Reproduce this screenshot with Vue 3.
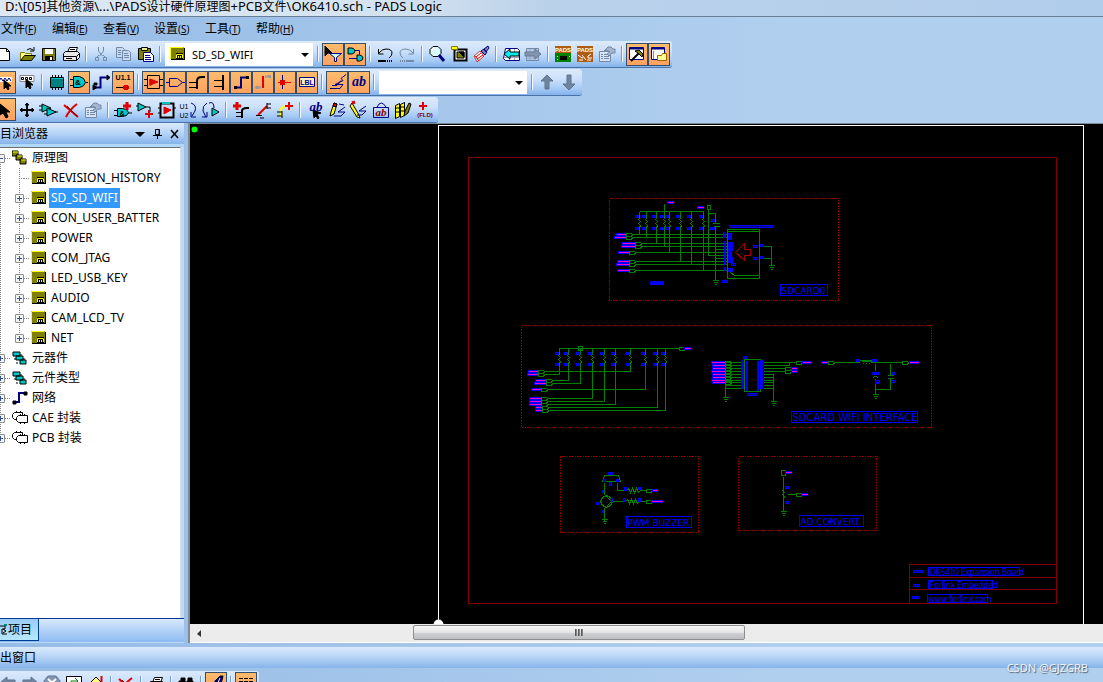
<script setup>
import { ref, h } from 'vue'

const K = '#000'
const N = '#000080'
const T = '#008080'
const C = '#00c8c8'
const R = '#e00000'
const Y = '#ffff00'
const O = '#808000'
const W = '#fff'
const G = '#7288a4'
const X = 'none'

/* Each icon is a list of [path, fill, stroke, stroke width] on a 22 x 22 cell. */
const gate = (x, y) => [`M${x} ${y}h5q5 0 6 4q-1 4-6 4h-5z`, C, K]
const icons = {
  new: [['M2.5 5.5h10l3 3v9h-13z', W, K], ['M12.5 5.5v3h3', X, K]],
  open: [['M4.5 17.5v-8h4l1 1h6v3', '#ffff90', O], ['M4.5 17.5l4-5h11l-4 5z', O, K], ['M11 7q3-3 6 0M18 4v4h-4', X, K]],
  save: [['M4.5 5.5h13v12h-13z', O, K], ['M7 6h8v5h-8z', W, X], ['M7 13h8v4h-8z', K, X], ['M12 14h2v3h-2z', W, X]],
  print: [['M7.5 9.5l2-5h8l-2 5z', W, K], ['M10 6.5h5M9 8.5h5', X, K], ['M3.5 10.5l2-2h12l2 2v4l-3 3h-13z', '#e6e6e6', K], ['M3.5 13.5h13v4M16.5 13.5l3-3M6 15.5h6', X, K]],
  cut: [['M8.5 4v4l4 5M13.5 4v4l-4 5', X, G], ['M5.5 14.5h3v3h-3zM13.5 14.5h3v3h-3zM9 12l-2 2M13 12l2 2', X, G]],
  copy: [['M4.5 4.5h6l2 2v8h-8z', '#c5daf5', G], ['M10.5 7.5h6l2 2v8h-8z', '#c5daf5', G], ['M6 7.5h3M6 9.5h3M6 11.5h3M12 10.5h4M12 12.5h5M12 14.5h5', X, G]],
  paste: [['M4.5 5.5h12v11h-12z', O, K], ['M7.5 4.5h6v3h-6z', '#eeee80', K], ['M9.5 9.5h7l3 3v6h-10z', W, N], ['M11 12.5h5M11 14.5h6M11 16.5h6', X, N]],
  filter: [['M3 3v10l3-3 4 0z', K, K], ['M7.5 10.5h12l-5 4v4h-2v-4z', '#c8ffff', N]],
  netfilter: [['M4 5h4q3 1 3 3t-3 3h-4z', C, K], ['M13 12h3q3 1 3 3t-3 3h-3z', C, K], ['M11 7.5h4.5v4M5 15.5h8', X, N]],
  undo: [['M5 10q3-4 7-4 6 0 6 4 0 3-3 5M4.5 6v5h5', X, K], ['M4 18h8M13 18h1M15 18h1M17 18h1', X, K, 2]],
  redo: [['M17 10q-3-4-7-4-6 0-6 4 0 3 3 5M17.500 6v5h-5', X, G], ['M10 18h8M4 18h1M6 18h1M8 18h1', X, G, 2]],
  zoom: [['M7 3.500h5l3 3v4l-3 3h-5l-3-3v-4z', '#d8ffff', K], ['M6 9q0-3 3-3', X, W, 2], ['M13 12l5 6', X, N, 3]],
  board: [['M6.5 6.5h12v11h-12z', W, K, 2], ['M9 9h7v6h-7z', O, K], ['M11 9l5 5v-5z', K, K], ['M3.500 3.500h6v3h-6z', Y, O]],
  redraw: [['M4 13l6-5 4 5-7 6z', W, '#c04040'], ['M6 14l5-4M7 16l6-4M5 13l4 5', X, R], ['M11 8l3-2 3 3-2 3zM14 6l4-3 1 2-3 4z', '#8080b8', N]],
  prev: [['M5.5 5.5h12l2 2v10h-14l-2-2z', W, N], ['M9.500 6v11M14.500 6v11M4 14.500h15', X, '#a0a0c8'], ['M4 11l6-5v3h9v4h-9v3z', '#00f0f0', K]],
  next: [['M4.5 5.5h12v12h-12z', '#b5cbe8', G], ['M8 6v11M12 6v11M4 15h13', X, '#90a8c8'], ['M19 11l-6-5v3h-10v4h10v3z', '#8295b0', '#66798f']],
  pads: [['M3 3h16v16h-16z', '#b05c10', X], ['M3 10h16v9h-16z', '#008000', X], ['M8 13h7v4h-7z', K, X], ['M5 13h1v1h-1zM17 13h1v1h-1zM5 16h1v1h-1z', Y, X]],
  padsr: [['M3 3h16v16h-16z', '#b05c10', X], ['M4 12l4 3h1M8 12l4 5M5 17h4M17 11l-3 2v2h4M13 17h4', X, W]],
  props: [['M3.5 8.5h11v10h-11z', '#d5e4f7', G], ['M5 11.5h2M8 11.5h5M5 13.5h2M8 13.5h5M5 15.5h2M8 15.5h5', X, G], ['M8 8l4-4h3l2 2h2v4h-3l-3 3-2-2 3-2-3-2z', '#a4b5ce', G]],
  hammerw: [['M3.5 4.5h14v12h-14z', W, N], ['M4 5.5h13', X, N, 2], ['M5 18l8-8', X, K, 2], ['M9 8l4-1 4 4-1 3-4-4z', O, K]],
  windows: [['M3.5 4.5h13v12h-13z', W, N], ['M4 5.5h12', X, N, 2], ['M5.5 8v8', X, '#8080c0'], ['M9.5 12.5h4l1-2h4v7h-9z', '#ffff90', '#a06000']],
  netsel: [['M2 6h16v5h-16z', W, X], ['M3 7l2 3 2-3 2 3 2-3 2 3 2-3 2 3', X, N], ['M10 9v9l2-2 2 3 1-1-1-3h3z', K, K]],
  pinsel: [['M4 4.5h14v6h-14z', W, '#888'], ['M5.5 6.5h2v2h-2zM9.5 6.5h2v2h-2zM13.5 6.5h2v2h-2z', X, K], ['M10 8v9l2-2 2 3 1-1-1-3h3z', K, K]],
  chip: [['M4.5 6.5h13v10h-13z', T, K], ['M6.5 4v3M9.5 4v3M12.5 4v3M15.5 4v3M6.5 16v3M9.5 16v3M12.5 16v3M15.5 16v3', X, K], ['M5 7.500h12', X, C]],
  gate: [['M2 8.5h4M2 14.5h4M17 11.5h3', X, K], ['M5.500 5.500h6q5 1 6 6q-1 4-6 5h-6z', C, K]],
  conn: [['M4 16.500h6.500v-10h8', X, N, 2], ['M3 14v5l4-2.500zM17 4v5l3-2.500zM4 12h3v2h-3z', K, K]],
  refdes: [['M4 16.500h7', X, K], ['M12 14h4v5h-4zM11 15h6v3h-6z', R, X]],
  part: [['M5.500 4.500h12v13h-12z', X, K], ['M2 8.500h3M2 14.500h3M18 8.500h3M18 14.500h3', X, K], ['M8 8l8 3-8 3zM8 8v7', R, R]],
  off: [['M5.500 7.500h8l5 4-5 4h-8z', X, N], ['M2 11.500h3M18 11.500h3', X, N]],
  bus: [['M3 11.500h7M3 16.500h7', X, K], ['M11 18v-8q0-4 5-4h3', X, K, 2]],
  bus2: [['M15 4v15', X, K, 2], ['M6 9.500h8M6 15.500h8', X, K]],
  net: [['M4 16.500h7v-10h7', X, N, 2], ['M4 15h3v3h-3zM16 5h3v3h-3z', K, X]],
  grey: [['M3 16.500h6M13 5.500h6', X, '#999', 2], ['M11 5v12', X, R, 2], ['M4 15h3v3h-3zM16 4h3v3h-3z', '#999', X]],
  tie: [['M4 11.500h13', X, R], ['M8.500 4v14', X, N], ['M6 9h5v5h-5z', R, X]],
  lbl: [['M3.500 6.500h15v9h-15z', '#fff0c8', N]],
  pen: [['M4 17.500h10l3-4h-8l8-4-2-2 5-4', X, N], ['M6 14.500h5l4-5', X, N]],
  ab: [],
  up: [['M11 4l6 6h-4v8h-4v-8h-4z', '#71849f', '#60738f']],
  down: [['M11 19l6-6h-4v-9h-4v9h-4z', '#71849f', '#60738f']],
  arrow: [['M6 5v11l3-2 3 5 2-1-2-5h4z', K, K]],
  move: [['M11 4v14M4 11h14', X, K, 2], ['M9 6l2-2 2 2zM9 16l2 2 2-2zM6 9l-2 2 2 2zM16 9l2 2-2 2z', K, K]],
  dup: [['M4 5l9 4-9 4z', C, K], ['M9 9l9 4-9 4z', C, K], ['M1 7h3M1 11h3M6 15h3M17 13h3', X, K]],
  del: [['M4 6l14 12M17 5q-7 5-11 13', X, R, 2], ['M7 7l10 10', X, '#600', 1]],
  addpart: [['M2 11.500h4M2 16.500h4M16 14h4', X, K], gate(5.5, 9.5), ['M15 3v8M11 7h8', X, R, 3]],
  addgate: [['M2 7h3M12 8h4v5', X, K], ['M4 4l8 4-8 4z', C, K], ['M15 11v8M11 15h8', X, R, 2]],
  swap: [['M4.500 4.500h13v14h-13z', '#c8e0ff', K, 2], ['M2 9h3M2 14h3M18 9h2', X, K], ['M8 8l7 3-7 4z', R, R], ['M6 4h8', X, C, 2]],
  rename: [['M13 4q6 2 4 8l-3 5M13 13v5h5', X, N]],
  swapref: [['M7 4q-5 3-4 8l3 6M2 18h5v-5M9 4q5-2 5 5', X, N], ['M12 9l7 4-7 4z', C, K]],
  addbus: [['M7 3v8M3 7h8', X, R, 3], ['M12 19v-7q0-3 5-3h2', X, K, 2], ['M6 13.500h5M6 17.500h5', X, K]],
  split: [['M6 16l9-9', X, R, 2], ['M4 16.500h6M15 4v6M15 5h4M15 9h4M8 19h4', X, K]],
  extend: [['M7 18v-8q2-3 7-3', X, Y, 2], ['M15 3v8M11 7h8', X, R, 2], ['M3 13h5M3 17h5M8 12v7', X, K]],
  abcur: [['M9 11l1 8 2-2 2 3 1-1-2-4 4-1z', K, K]],
  pencil: [['M4 17l1-4 3-9 3 1-3 10z', Y, K], ['M8 4l3 1-1 3-3-1z', R, K], ['M8 17h7l4-4h-7l7-5M13 5l5 1', X, N]],
  modify: [['M4 4l7 12 1 3-3-1-7-11z', Y, K], ['M4 4l3-1', X, R, 3], ['M9 16h5l4-4h-7l7-5', X, N]],
  abbox: [['M3.500 8.500h15v10h-15z', X, N], ['M7 8q4-8 9 0', X, N]],
  lib: [['M3.500 6.500l4-2v13l-4 2zM8.500 5.500l4-2v13l-4 2z', Y, K], ['M4 9h3M4 13h3M9 8h3M9 12h3', X, K], ['M12 17l1-5 4-8 2 1-3 9z', O, K]],
  field: [['M9 3v8M5 7h8', X, R, 2]],
  sheet: [['M1 2h14v12h-14z', K, X], ['M0 1h14v12h-14z', O, X], ['M.500 13V1.500h13', X, Y], ['M6 7h7v6h-7z', K, X], ['M6.500 12V8.500h6V12M8.500 10v2M10.500 10v2', X, Y]],
  stack: [['M0 1h6v5h-6zM4 5h6v5h-6zM8 9h6v5h-6z', O, K], ['M1 2h5M5 6h5M9 10h5', X, Y]],
  parts: [['M1 2h7v4h-7zM4 6h7v4h-7zM8 10h6v4h-6z', C, K], ['M3 8v2M5 12v2M9 4v2M12 8v2', X, K]],
  netw: [['M2 12h5V3h6', X, N, 2], ['M1 11h3v3H1zM12 2h3v3h-3z', K, K]],
  outline: [['M2.500 2.500h8v7h-8l-2-2v-3z', W, K], ['M6.500 5.500h9v7h-9l-2-2v-3z', W, K], ['M4.500 1v2M8.500 1v2M8.500 12v2M12.500 12v2M8.500 4v2M12.500 4v2', X, K]],
  back: [['M4 9l6-5v3h8v4h-8v3z', '#71849f', '#60738f']],
  fwd: [['M18 9l-6-5v3h-8v4h8v3z', '#71849f', '#60738f']],
  stop: [['M7 3h8l4 5v6h-16v-6z', '#8195b0', '#60738f'], ['M7 6l8 7M15 6l-8 7', X, W, 2]],
  refresh: [['M3.500 3.500h15v12h-15z', W, K], ['M8 13v-5h6M12 5l3 3-3 3', X, '#008000']],
  home: [['M3 12l8-8 8 8z', '#ffff70', K], ['M16.500 3v6', X, R, 2]],
  find: [['M6 5h4v3H6zM13 5h4v3h-4zM4 8h6v6H4zM12 8h6v6h-6zM10 9h2v3h-2z', K, K]],
  quill: [['M8 15l2-7 5-5h3l-2 8-5 4z', N, K], ['M12 12l3-7', X, W]],
  list: [['M4 5.500h4M9 5.500h4M14 5.500h4M4 8.500h4M9 8.500h4M14 8.500h4M4 11.500h4M9 11.500h4M14 11.500h4', X, K]],
}
const texts = {
  pads: ['PADS', 11, 9, 6, W], padsr: ['PADS', 11, 9, 6, W], refdes: ['U1.1', 11, 9, 7, K], lbl: ['LBL', 11, 14, 7, N],
  ab: ['ab', 11, 15, 14, N, 1], abcur: ['ab', 12, 12, 13, N, 1], abbox: ['ab', 11, 17, 11, '#800000', 1],
  field: ['(FLD)', 11, 18, 6, '#800000'], rename: ['U1', 6, 10, 7, K], gate: ['&', 10, 14, 8, K], addpart: ['&', 10, 17, 7, K],
}
const Icon = ({ name }) => {
  const small = ['sheet', 'stack', 'parts', 'netw', 'outline'].includes(name)
  const size = small ? 16 : 22
  const kids = icons[name].map(([d, fill, stroke, w]) => h('path', { d, fill, stroke, 'stroke-width': w || 1 }))
  const t = texts[name]
  if (t) {
    kids.push(h('text', {
      x: t[1], y: t[2], 'font-size': t[3], fill: t[4], 'text-anchor': 'middle', 'font-weight': name === 'rename' ? 'normal' : 'bold',
      'font-style': t[5] ? 'italic' : 'normal', 'font-family': t[5] ? 'Liberation Serif, serif' : 'Liberation Sans, sans-serif',
    }, t[0]))
  }
  if (name === 'rename') kids.push(h('text', { x: 6, y: 19, 'font-size': 7, 'text-anchor': 'middle', 'font-family': 'Liberation Sans, sans-serif' }, 'U2'))
  return h('svg', { width: size, height: size, viewBox: `0 0 ${size} ${size}`, 'aria-hidden': 'true' }, kids)
}
Icon.props = ['name']

const menus = [['文件', 'F'], ['编辑', 'E'], ['查看', 'V'], ['设置', 'S'], ['工具', 'T'], ['帮助', 'H']]
const split = (s) => s.split(' ').map((n) => ({ name: n.replace('*', ''), on: n.endsWith('*') }))
const bars = [
  split('new open save print | cut copy paste | SHEETS | filter* netfilter* | undo redo | zoom board redraw | prev next | pads padsr props | hammerw* windows*'),
  split('netsel* pinsel | chip gate* conn refdes* | part* off* bus* bus2* net* grey* tie* lbl* | pen* ab* | FIND | up down'),
  split('arrow* move dup del props | addpart addgate swap rename swapref | addbus split extend | abcur pencil modify abbox lib field'),
]
const bottomBar = split('back fwd stop refresh home | del | print | find | quill* | list*')

const sheets = ['REVISION_HISTORY', 'SD_SD_WIFI', 'CON_USER_BATTER', 'POWER', 'COM_JTAG', 'LED_USB_KEY', 'AUDIO', 'CAM_LCD_TV', 'NET']
const groups = [['元器件', 'parts'], ['元件类型', 'parts'], ['网络', 'netw'], ['CAE 封装', 'outline'], ['PCB 封装', 'outline']]
const current = ref('SD_SD_WIFI')
const query = ref('')

const res = (x, y) => `M${x} ${y}l-1 1 2 2-2 2 2 2-1 2`
const gnd = (x, y) => `M${x - 3} ${y}h6M${x - 2} ${y + 2}h4M${x - 1} ${y + 4}h2`
const port = (x, y) => `M${x} ${y - 1}h5l1 1-1 2h-5z`

const pullA = [[639, 234], [646, 237], [656, 243], [664, 246], [669, 252], [680, 260], [691, 264], [703, 270]]
const rowsA = [[616, 632, 234], [614, 632, 237], [622, 641, 243], [621, 641, 246], [618, 635, 252], [617, 635, 261], [616, 635, 264], [617, 635, 270]]
const pullB = [[559, 374], [568, 380], [580, 383], [592, 398], [604, 400], [615, 403], [630, 371], [645, 389], [657, 407], [665, 410]]
const rowsB = [[528, 544, 371, 630], [527, 544, 374, 559], [535, 552, 380, 568], [534, 552, 383, 580], [531, 547, 389, 645], [529, 547, 398, 592], [529, 547, 401, 604], [529, 547, 404, 615], [535, 548, 407, 657], [535, 548, 410, 665]]
const chipRows = [362, 365, 368, 371, 374, 377, 380, 382, 385, 388]

const wires = [
  'M639 211H703M664 203V211',
  ...pullA.map(([x, y]) => `M${x} 211V218${res(x, 218)}V${y}`),
  ...rowsA.map(([, e, y]) => `M${e} ${y}H727${port(e - 6, y)}`),
  'M707 205h3v4h-3zM708 209V255H727M708 213H715V222M712 223h7M713 226h6M715 226V280M715 249H727M715 258H727',
  'M727 229H759V278H727zM727 231H759M730 272l4 3H759M763 246H771V265M763 258H771',
  gnd(715, 280), gnd(771, 265),
  'M559 348H679M578 346h4v4h-4z', port(679, 348),
  ...pullB.map(([x, y]) => `M${x} 347V354${res(x, 354)}V${y}`),
  ...rowsB.map(([, e, y, t]) => `M${e} ${y}H${t}${port(e - 6, y)}`),
  'M744 359H760V391H744zM725 360V397M773 374V401',
  ...chipRows.map((y, i) => `M725 ${y}H742M763 ${y}H${i < 4 ? [789, 789, 785, 785][i] : 773}${i < 8 ? port(725, y) : ''}`),
  gnd(725, 397), gnd(773, 401), 'M789 365v-3H796', port(796, 362), port(785, 368), port(785, 371),
  port(828, 362), 'M834 362H859v-2h12v2H902M861 361h9M863 362v1M866 362v1M869 362v1', port(902, 362),
  'M875 363V370M872 378q3-4 6 0M875 378V394M890 363V375M887 375h6M887 378h6M890 378V389H875', gnd(875, 394),
  'M602 481L604 475H618L620 481zM604 482V494M604 507V520M617 482V490H626l2-2 2 4 2-4 2 4 2-4 2 4 2-2H646M612 501H625l2-2 2 4 2-4 2 4 2-4 2 4 2-2H646',
  gnd(604, 519), port(646, 490), port(646, 501), 'M606 495l4 2 2 4-2 4-4 2-4-2-2-4 2-4zM606 496l5 5-5 5',
  'M781 470h4v5h-4zM783 476V490V511M787 494H796', res(783, 489), port(796, 494), gnd(783, 511),
].join('')

const nets = [
  ...rowsA.map(([x, e, y]) => [x, y - 1, e - 6 - x]),
  ...rowsB.map(([x, e, y]) => [x, y - 1, e - 6 - x]),
  ...chipRows.slice(0, 8).map((y, i) => [711 + (i % 3 ? 1 : 0), y - 1, 14 - (i % 3 ? 1 : 0)]),
  [667, 201, 7], [697, 206, 7], [684, 347, 7], [802, 361, 9], [791, 367, 6], [791, 370, 6], [821, 361, 7], [909, 361, 10],
  [652, 489, 6], [651, 500, 12], [785, 471, 7], [801, 493, 7],
]
const marks = [
  ...pullA.flatMap(([x]) => [[x - 4, 215, 4, 3], [x - 4, 227, 4, 3]]),
  ...pullB.flatMap(([x]) => [[x - 4, 352, 4, 3], [x - 4, 363, 4, 3]]),
  [711, 219, 4, 3], [710, 227, 5, 3], [723, 232, 3, 6], [724, 241, 2, 24], [724, 267, 2, 4], [728, 233, 4, 7], [728, 242, 5, 9],
  [728, 251, 4, 6], [728, 257, 5, 6], [731, 263, 5, 3], [728, 268, 5, 4], [729, 225, 44, 3], [753, 245, 5, 3], [753, 257, 5, 3],
  [760, 244, 3, 3], [760, 256, 3, 3], [722, 280, 6, 3], [650, 281, 14, 4],
  [743, 356, 4, 3], [747, 393, 11, 3], [741, 360, 3, 29], [746, 361, 2, 30], [757, 361, 2, 30], [760, 360, 3, 29],
  [856, 359, 4, 3], [872, 359, 5, 3], [872, 372, 8, 3], [875, 380, 5, 4], [891, 372, 4, 3], [891, 380, 5, 3],
  [608, 472, 5, 3], [603, 479, 3, 3], [616, 479, 3, 3], [609, 482, 3, 4], [602, 490, 2, 3], [596, 502, 3, 3], [611, 498, 2, 4],
  [602, 510, 2, 3], [624, 487, 3, 4], [638, 487, 4, 3], [623, 498, 3, 4], [638, 498, 3, 4], [785, 486, 4, 3], [785, 501, 4, 3],
  [913, 570, 10, 3], [913, 584, 7, 3], [912, 596, 7, 3],
]
const frames = [[609, 198, 229, 102], [521, 325, 410, 102], [560, 456, 138, 76], [738, 456, 138, 74]]
const labels = [
  ['SDCARD0', 780, 284, 47, 11, 9], ['SDCARD WIFI INTERFACE', 791, 411, 126, 11, 10],
  ['PWM BUZZER', 626, 516, 65, 11, 9], ['AD CONVERT', 799, 515, 64, 11, 9],
  ['OK6410 Expansion Board', 928, 567, 91, 8, 8], ['Forlinx Embedded', 928, 580, 64, 8, 8], ['www.forlinx.com', 927, 594, 60, 8, 8],
]
</script>

<template>
  <div class="app">
    <header class="title">D:\[05]<span>其他资源</span>\...\PADS<span>设计硬件原理图</span>+PCB<span>文件</span>\OK6410.sch - PADS Logic</header>
    <nav class="menus">
      <button v-for="m in menus" :key="m[1]" class="menu">{{ m[0] }}<span class="key">(<u>{{ m[1] }}</u>)</span></button>
    </nav>
    <div class="bars">
      <div v-for="(bar, i) in bars" :key="i" class="bar">
        <template v-for="(b, j) in bar" :key="j">
          <i v-if="b.name === '|'" class="sep"></i>
          <div v-else-if="b.name === 'SHEETS'" class="combo sheets">
            <Icon name="sheet" class="comboicon" />
            <select v-model="current" aria-label="Sheet"><option v-for="s in sheets" :key="s">{{ s }}</option></select>
          </div>
          <div v-else-if="b.name === 'FIND'" class="combo">
            <select v-model="query" aria-label="Find"><option value=""></option></select>
          </div>
          <button v-else class="tool" :class="{ on: b.on }" :aria-label="b.name"><Icon :name="b.name" /></button>
        </template>
      </div>
    </div>

    <main class="work">
      <aside class="side">
        <div class="panelhead sidehead">
          <span class="clip">项目浏览器</span>
          <button aria-label="Menu"><svg width="11" height="10"><path d="M0 3h10l-5 5z" /></svg></button>
          <button aria-label="Pin"><svg width="11" height="10"><path d="M3.500 .500h4v5h-4zM1 6.500h9M5.500 6v4M7 1v5" fill="none" stroke="#000" /></svg></button>
          <button aria-label="Close"><svg width="11" height="10"><path d="M2 1l7 8M9 1l-7 8" stroke="#000" stroke-width="1.500" /></svg></button>
        </div>
        <div class="treebox">
          <ul class="tree">
            <li class="root">
              <div class="row"><button class="exp open" aria-label="Collapse"></button><i class="dots"></i><Icon name="stack" /><span class="name">原理图</span></div>
              <ul class="kids">
                <li v-for="(s, i) in sheets" :key="s" class="row kid">
                  <button v-if="i" class="exp" aria-label="Expand"></button><i v-else class="noexp"></i>
                  <i class="dots"></i><Icon name="sheet" /><span class="name" :class="{ sel: s === current }">{{ s }}</span>
                </li>
              </ul>
            </li>
            <li v-for="g in groups" :key="g[0]" class="row"><button class="exp" aria-label="Expand"></button><i class="dots"></i><Icon :name="g[1]" /><span class="name">{{ g[0] }}</span></li>
          </ul>
        </div>
        <div class="tabs"><button class="tab"><svg width="7" height="14" aria-hidden="true"><path d="M0 3h5v3H2v5h5M3 6l3 2-3 2" fill="none" stroke="#000" /><path d="M4 2h3" stroke="#008080" stroke-width="2" /></svg>项目</button></div>
      </aside>

      <section class="view">
        <svg class="sheet" width="100%" height="100%">
          <g transform="translate(-189.500 -123.500)" fill="none" shape-rendering="crispEdges">
            <path d="M438 624V125H1083V624" stroke="#fff" />
            <path d="M468 157H1056V603H468zM909 603V564H1056M909 577H1056M909 589H1056" stroke="#800000" />
            <rect v-for="f in frames" :key="f[0]" :x="f[0]" :y="f[1]" :width="f[2]" :height="f[3]" stroke="#900000" stroke-dasharray="2 1 2 1 1 1" />
            <path :d="wires" stroke="#008000" />
            <path d="M735 252L744 243V249H750V255H744V260z" stroke="#a00000" />
            <g transform="translate(-.5 -.5)">
              <g v-for="(n, i) in nets" :key="i">
                <rect :x="n[0]" :y="n[1]" :width="n[2]" height="3" fill="#00f" />
                <path :d="`M${n[0] + 1} ${n[1] + 1.5}h${n[2] - 1}`" stroke="#ff00c8" />
              </g>
              <g v-for="(m, i) in marks" :key="i">
                <rect :x="m[0]" :y="m[1]" :width="m[2]" :height="m[3]" fill="#00f" />
                <path :d="`M${m[0] + 1} ${m[1] + 1.5}h${m[2] - 2}`" stroke="#000070" stroke-dasharray="1 1" />
              </g>
            </g>
            <g v-for="l in labels" :key="l[0]">
              <rect :x="l[1]" :y="l[2]" :width="l[3]" :height="l[4]" stroke="#00f" />
              <text :class="{ small: l[5] === 8 }" :x="l[1] + 1" :y="l[2] + l[4] - (l[5] === 8 ? 1 : 2)" :font-size="l[5]" fill="#0000ff">{{ l[0] }}</text>
            </g>
            <g shape-rendering="geometricPrecision">
              <circle cx="438" cy="624" r="5" fill="#fff" />
              <circle cx="194" cy="129" r="3" fill="#0f0" />
            </g>
          </g>
        </svg>
        <div class="scroll">
          <button class="left" aria-label="Scroll left"><svg width="4" height="7"><path d="M4 0v7L0 4z" fill="#333" /></svg></button>
          <div class="track"><div class="thumb"><i></i><i></i><i></i></div></div>
        </div>
      </section>
    </main>

    <footer class="output">
      <div class="panelhead"><span class="clip">输出窗口</span></div>
      <div class="bar low">
        <template v-for="(b, j) in bottomBar" :key="j">
          <i v-if="b.name === '|'" class="sep"></i>
          <button v-else class="tool" :class="{ on: b.on }" :aria-label="b.name"><Icon :name="b.name" /></button>
        </template>
      </div>
    </footer>
    <div class="mark">CSDN @GJZGRB</div>
  </div>
</template>

<style>
html, body { height: 100%; overflow: hidden; }
</style>

<style scoped>
.app { position: relative; display: flex; flex-direction: column; height: 100vh; overflow: hidden; font: 12px/20px "Noto Sans", "Noto Sans CJK SC", sans-serif; color: #000; background: linear-gradient(90deg, #96bbe5, #b0cfef 70%); }
button { margin: 0; padding: 0; border: 0; background: none; font: inherit; color: inherit; }
ul { list-style: none; margin: 0; padding: 0; }
.title { flex: none; height: 17px; font-size: 13px; line-height: 12px; padding-left: 5px; white-space: nowrap; background: linear-gradient(90deg, #dce8f3, #d5e3f0 35%, #bad1ea 50%, #b1cdec); border-bottom: 1px solid #6a7f98; box-sizing: border-box; }
.title span { font-size: 12px; }
.menus { flex: none; display: flex; height: 24px; }
.menu { width: 51px; text-align: left; padding-left: 1px; white-space: nowrap; }
.key { font-size: 10px; }
.bars { flex: none; display: flex; flex-direction: column; align-items: flex-start; gap: 1px; }
.bar { display: flex; align-items: center; height: 27px; padding-right: 2px; margin-left: -6px; box-sizing: border-box; border-bottom: 1px solid #4a73ac; border-radius: 0 3px 3px 0; background: linear-gradient(#dceafc, #cbe0fa 40%, #a6cbf5 75%, #84b2ea); }
.bar:last-child { height: 26px; }
.tool { width: 22px; height: 23px; flex: none; }
.tool svg { display: block; }
.on { background: linear-gradient(#fdbc6c, #ffa060); box-shadow: inset 0 0 0 1px #34506e; }
.sep { width: 8px; height: 16px; flex: none; background: linear-gradient(90deg, transparent 3px, #6f9dd6 3px, #6f9dd6 4px, #f4f9ff 4px, #f4f9ff 5px, transparent 5px); }
.combo { display: flex; align-items: center; width: 148px; height: 23px; margin: 0 1px; background: #fff; position: relative; }
.comboicon { position: absolute; left: 5px; pointer-events: none; }
.combo select { width: 100%; height: 100%; border: 0; padding: 0 20px 0 4px; appearance: none; font: 11px "Noto Sans", sans-serif; color: #000; background: none; }
.sheets { margin: 0 1px; }
.sheets select { padding-left: 27px; }
.combo::after { content: ""; position: absolute; right: 4px; top: 10px; border: 4px solid transparent; border-top-color: #000; border-bottom: 0; }
.work { flex: 1; min-height: 0; display: flex; }
.side { width: 184px; flex: none; display: flex; flex-direction: column; background: #b9dcf8; }
.panelhead { display: flex; align-items: center; gap: 6px; height: 20px; flex: none; background: linear-gradient(#dbeafc, #b5d3f6 50%, #86b4ea); overflow: hidden; }
.sidehead { height: 21px; line-height: 18px; padding-right: 4px; border-bottom: 3px solid #b0d8f8; }
.sidehead .clip { flex: 1; }
.sidehead button { width: 11px; height: 12px; line-height: 0; }
.clip { margin-left: -12px; white-space: nowrap; }
.treebox { flex: 1; min-height: 0; overflow: hidden; margin-right: 3px; background: #fff; border-top: 1px solid #6e6e6e; border-right: 1px solid #ddd; }
.tree { margin-left: -4px; background: repeating-linear-gradient(#888 0 1px, transparent 1px 2px) 4px 10px / 1px 280px no-repeat; }
.row { display: flex; align-items: center; height: 20px; }
.row svg { flex: none; }
.kids { margin-left: 19px; background: repeating-linear-gradient(#888 0 1px, transparent 1px 2px) 4px 0 / 1px 170px no-repeat; }
.exp { position: relative; width: 9px; height: 9px; flex: none; border: 1px solid #8c8c8c; border-radius: 1px; background: linear-gradient(#34529a, #34529a) center / 5px 1px no-repeat, linear-gradient(#34529a, #34529a) center / 1px 5px no-repeat, #f4f4f4; }
.exp.open { background: linear-gradient(#34529a, #34529a) center / 5px 1px no-repeat, #f4f4f4; }
.noexp { width: 5px; height: 1px; margin-left: 4px; background: repeating-linear-gradient(90deg, #888 0 1px, transparent 1px 2px); }
.dots { width: 6px; height: 1px; margin-right: 1px; background: repeating-linear-gradient(90deg, #888 0 1px, transparent 1px 2px); }
.name { padding: 0 2px; margin-left: 2px; white-space: nowrap; }
.sel { background: #3399ff; color: #fff; }
.tabs { height: 23px; flex: none; border-top: 1px solid #003c94; background: linear-gradient(#d8e9fd, #8dbaf0); margin-bottom: 1px; }
.tab { display: flex; align-items: center; gap: 1px; width: 39px; height: 22px; box-sizing: border-box; white-space: nowrap; overflow: hidden; background: linear-gradient(#9ccbf6, #b5e8fc); border: solid #003c94; border-width: 0 1px 1px 0; }
.view { flex: 1; min-width: 0; display: flex; flex-direction: column; margin-left: 4px; border: solid #808890; border-width: 1px 0 0 2px; background: #000; }
.sheet { display: block; flex: 1; min-height: 0; font-family: "DejaVu Sans", sans-serif; }
.small { font-family: "Noto Sans", sans-serif; }
.scroll { flex: none; display: flex; height: 18px; background: #ececec; border-bottom: 1px solid #fff; }
.left { width: 17px; line-height: 0; }
.track { flex: 1; padding: 1px 0; }
.thumb { display: flex; justify-content: center; align-items: center; gap: 1px; box-sizing: border-box; width: 37%; height: 15px; margin-left: 23%; border: 1px solid #8e8e8e; border-radius: 2px; background: linear-gradient(#f6f6f6, #e4e4e6 50%, #cfd0d3 55%, #bfc0c4); }
.thumb i { width: 2px; height: 7px; background: linear-gradient(90deg, #444, #999); }
.output { flex: none; height: 35px; margin-top: 4px; overflow: hidden; }
.output .panelhead { height: 21px; line-height: 18px; }
.bar.low { width: max-content; margin-top: 3px; margin-left: -3px; height: 26px; }
.mark { position: absolute; right: 15px; bottom: 5px; font-size: 11px; line-height: 18px; color: #eef3f9; text-shadow: 1px 1px 1px #50606f; }
</style>
